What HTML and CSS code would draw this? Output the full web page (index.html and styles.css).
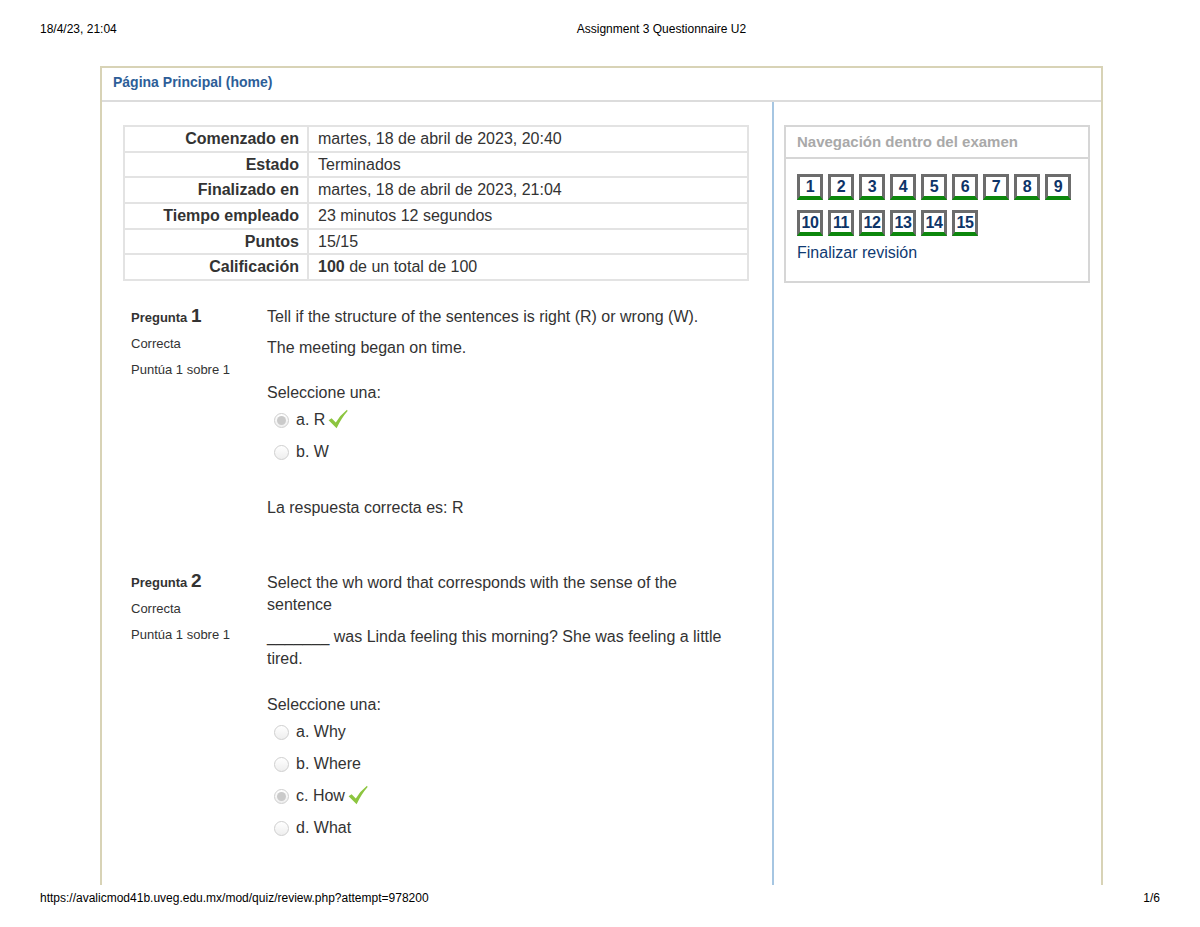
FILE: index.html
```html
<!DOCTYPE html>
<html lang="es">
<head>
<meta charset="utf-8">
<title>Assignment 3 Questionnaire U2</title>
<link rel="stylesheet" href="styles.css">
</head>
<body>
<header class="print-head">
  <span class="print-date">18/4/23, 21:04</span>
  <span class="print-title">Assignment 3 Questionnaire U2</span>
</header>

<div class="frame">
  <div class="frame-head"><a class="home-link">Página Principal (home)</a></div>
  <div class="frame-body">
    <main class="main">
      <table class="summary">
        <tr><th>Comenzado en</th><td>martes, 18 de abril de 2023, 20:40</td></tr>
        <tr><th>Estado</th><td>Terminados</td></tr>
        <tr><th>Finalizado en</th><td>martes, 18 de abril de 2023, 21:04</td></tr>
        <tr><th>Tiempo empleado</th><td>23 minutos 12 segundos</td></tr>
        <tr><th>Puntos</th><td>15/15</td></tr>
        <tr><th>Calificación</th><td><b>100</b> de un total de 100</td></tr>
      </table>

      <section class="q q1">
        <div class="q-info">
          <div class="q-title">Pregunta <span class="q-no">1</span></div>
          <div>Correcta</div>
          <div>Puntúa 1 sobre 1</div>
        </div>
        <div class="q-content">
          <div class="qtext">
            <p>Tell if the structure of the sentences is right (R) or wrong (W).</p>
            <p>The meeting began on time.</p>
          </div>
          <div class="prompt">Seleccione una:</div>
          <div class="answer">
            <div class="opt"><span class="radio checked"></span><span>a. R</span><svg class="tick" viewBox="0 0 20 20" width="20" height="20"><path d="M0.6 11.2 L3.6 9.2 L7.8 13.4 Q12.4 6 19 0.8 L19.6 2 Q13.6 8.8 8.6 19.2 Z" fill="#8cc53f"/></svg></div>
            <div class="opt"><span class="radio"></span><span>b. W</span></div>
          </div>
          <div class="outcome">La respuesta correcta es: R</div>
        </div>
      </section>

      <section class="q q2">
        <div class="q-info">
          <div class="q-title">Pregunta <span class="q-no">2</span></div>
          <div>Correcta</div>
          <div>Puntúa 1 sobre 1</div>
        </div>
        <div class="q-content">
          <div class="qtext">
            <p>Select the wh word that corresponds with the sense of the sentence</p>
            <p>_______ was Linda feeling this morning? She was feeling a little tired.</p>
          </div>
          <div class="prompt">Seleccione una:</div>
          <div class="answer">
            <div class="opt"><span class="radio"></span><span>a. Why</span></div>
            <div class="opt"><span class="radio"></span><span>b. Where</span></div>
            <div class="opt"><span class="radio checked"></span><span>c. How</span><svg class="tick" viewBox="0 0 20 20" width="20" height="20"><path d="M0.6 11.2 L3.6 9.2 L7.8 13.4 Q12.4 6 19 0.8 L19.6 2 Q13.6 8.8 8.6 19.2 Z" fill="#8cc53f"/></svg></div>
            <div class="opt"><span class="radio"></span><span>d. What</span></div>
          </div>
        </div>
      </section>
    </main>

    <aside class="side">
      <div class="nav-block">
        <div class="nav-head">Navegación dentro del examen</div>
        <div class="nav-body">
          <div class="qn-list">
            <span class="qn">1</span><span class="qn">2</span><span class="qn">3</span><span class="qn">4</span><span class="qn">5</span><span class="qn">6</span><span class="qn">7</span><span class="qn">8</span><span class="qn">9</span><span class="qn">10</span><span class="qn">11</span><span class="qn">12</span><span class="qn">13</span><span class="qn">14</span><span class="qn">15</span>
          </div>
          <a class="finish">Finalizar revisión</a>
        </div>
      </div>
    </aside>
  </div>
</div>

<footer class="print-foot">
  <span>https://avalicmod41b.uveg.edu.mx/mod/quiz/review.php?attempt=978200</span>
  <span>1/6</span>
</footer>
</body>
</html>
```

FILE: styles.css
```css
html, body {
  margin: 0;
  padding: 0;
  background: #fff;
}
body {
  width: 1200px;
  height: 927px;
  overflow: hidden;
  font-family: "Liberation Sans", Arial, sans-serif;
  color: #333;
}

.print-head {
  box-sizing: border-box;
  height: 66px;
  padding: 22px 40px 0 40px;
  display: flex;
  font-size: 12px;
  line-height: 14px;
  color: #000;
}
.print-title {
  margin-left: 460px;
}

.frame {
  box-sizing: border-box;
  margin-left: 100px;
  width: 1003px;
  height: 819px;
  border-top: 2px solid #d8d3b6;
  border-left: 2px solid #d8d3b6;
  border-right: 2px solid #d8d3b6;
  overflow: hidden;
}
.frame-head {
  height: 32px;
  border-bottom: 2px solid #dcdcdc;
  padding-left: 11px;
  line-height: 28px;
  font-size: 14px;
  font-weight: bold;
}
.home-link {
  color: #2d5e98;
}

.frame-body {
  display: flex;
  height: 783px;
}

.main {
  box-sizing: border-box;
  width: 670px;
  padding: 23px 23px 0 21px;
}

.summary {
  width: 626px;
  border-collapse: collapse;
  font-size: 16px;
  line-height: 21.67px;
}
.summary th,
.summary td {
  border: 2px solid #e3e3e3;
  padding: 1px 9px;
  text-align: left;
  vertical-align: middle;
}
.summary th {
  width: 165px;
  text-align: right;
  padding-right: 8px;
  font-weight: bold;
}
.summary td b {
  font-weight: bold;
}

.q {
  display: flex;
}
.q1 {
  margin-top: 23px;
}
.q2 {
  margin-top: 50px;
}
.q-info {
  box-sizing: border-box;
  width: 144px;
  padding-left: 8px;
  font-size: 13px;
  line-height: 26px;
}
.q-title {
  font-weight: bold;
  margin-top: -1px;
}
.q-no {
  font-size: 19px;
}
.q-content {
  width: 468px;
  padding-top: 2px;
  font-size: 16px;
  line-height: 22px;
}
.q2 .q-content {
  padding-top: 3px;
}
.q2 .qtext p {
  margin-bottom: 10px;
}
.q2 .prompt {
  margin-top: 24px;
}
.qtext p {
  margin: 0 0 9px 0;
}
.qtext p:last-child {
  margin-bottom: 0;
}
.prompt {
  margin-top: 23px;
}
.opt {
  display: flex;
  align-items: center;
  height: 32px;
  padding-left: 7px;
}
.radio {
  box-sizing: border-box;
  width: 15px;
  height: 15px;
  border-radius: 50%;
  border: 1px solid #cfcfcf;
  background: linear-gradient(#ffffff, #eeeeee);
  margin-right: 7px;
  display: flex;
  align-items: center;
  justify-content: center;
}
.radio.checked::after {
  content: "";
  width: 9px;
  height: 9px;
  border-radius: 50%;
  background: #cacaca;
}
.tick {
  margin-left: 3px;
  margin-top: -2px;
}
.outcome {
  margin-top: 29px;
}

.side {
  box-sizing: border-box;
  width: 329px;
  border-left: 2px solid #a6c6e2;
  padding: 23px 11px 0 10px;
}
.nav-block {
  border: 2px solid #d6d6d6;
}
.nav-head {
  box-sizing: border-box;
  height: 32px;
  border-bottom: 2px solid #d6d6d6;
  padding: 1px 0 0 11px;
  line-height: 28px;
  font-size: 15px;
  font-weight: bold;
  color: #a9a9a9;
}
.nav-body {
  padding: 15px 12px 17px 11px;
}
.qn-list {
  display: flex;
  flex-wrap: wrap;
  gap: 10px 5px;
}
.qn {
  box-sizing: border-box;
  width: 26px;
  height: 26px;
  border: 3px solid #6c6c6c;
  border-bottom: 4px solid #0c870c;
  background: #fff;
  text-align: center;
  font-size: 16px;
  font-weight: bold;
  line-height: 19px;
  color: #0e3468;
  letter-spacing: -0.5px;
}
.finish {
  display: block;
  margin-top: 6px;
  font-size: 16px;
  line-height: 22px;
  color: #0f3a72;
}

.print-foot {
  display: flex;
  justify-content: space-between;
  margin-top: 6px;
  padding: 0 40px;
  font-size: 12px;
  line-height: 14px;
  color: #000;
}
```
